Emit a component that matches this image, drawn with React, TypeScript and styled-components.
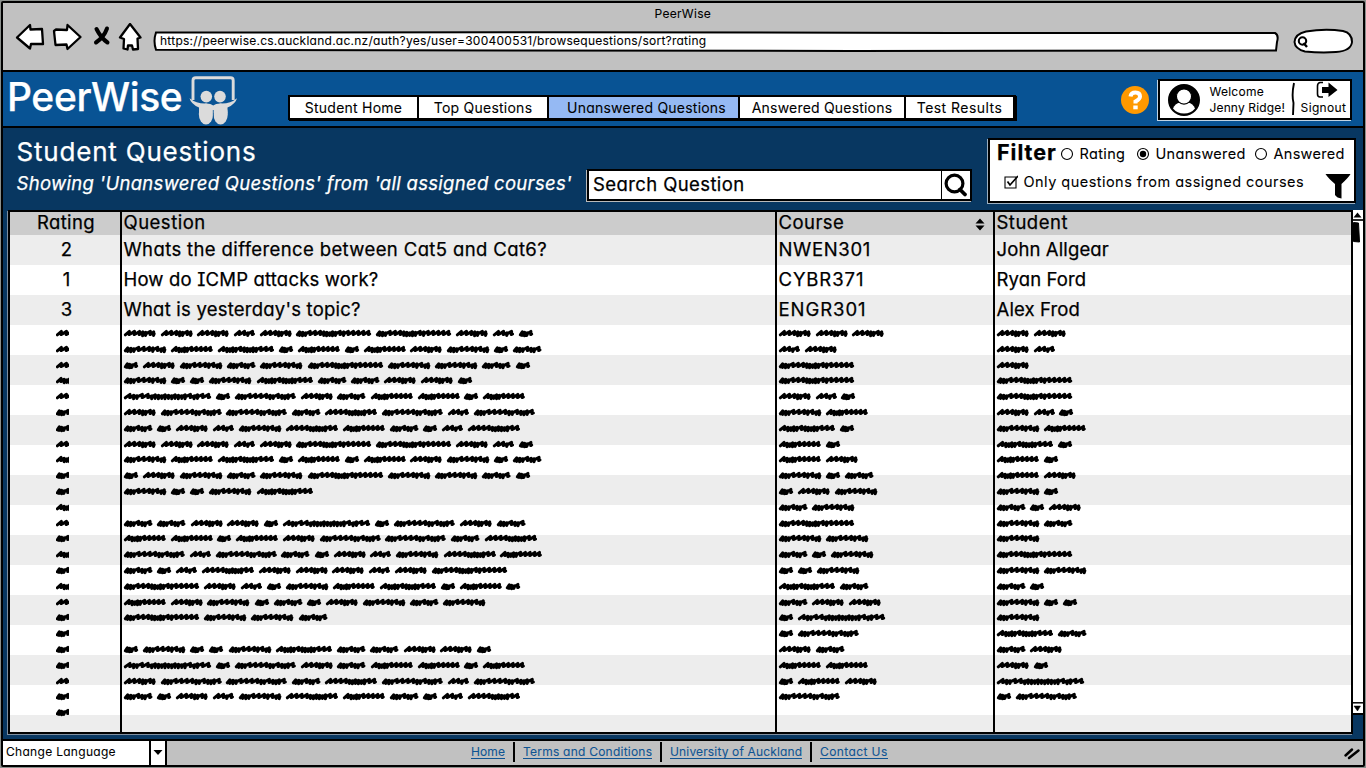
import React from "react";
import styled, { createGlobalStyle } from "styled-components";

const INK = "#000";
const CHROME = "#c1c1c1";
const BLUE = "#085394";
const NAVY = "#083761";
const LINK = "#0f5493";

const GlobalStyle = createGlobalStyle`
  * { box-sizing: border-box; }
  body {
    margin: 0;
    background: #8b908d;
    font-family: Inter, "Liberation Sans", sans-serif;
    font-feature-settings: "cv11" 1, "cv08" 1, "calt" 0;
    color: ${INK};
    overflow: hidden;
  }
`;

const Window = styled.div`
  display: flex;
  flex-direction: column;
  width: 1364px;
  height: 766px;
  margin: 1px;
  border: 2px solid ${INK};
  border-radius: 2px;
  background: ${CHROME};
`;

const Label = styled.span<{ $size: number; $track?: number; $weight?: number; $italic?: boolean }>`
  font-size: ${(p) => p.$size}px;
  line-height: 1;
  letter-spacing: ${(p) => p.$track ?? 0}px;
  font-weight: ${(p) => p.$weight ?? 400};
  font-style: ${(p) => (p.$italic ? "italic" : "normal")};
  -webkit-text-stroke: ${(p) => (p.$size > 17 ? 0.25 : 0.08)}px currentColor;
  white-space: nowrap;
`;

/* Browser chrome */
const Chrome = styled.header`
  height: 69px;
  border-bottom: 2px solid ${INK};
`;

const ChromeTitle = styled.div`
  height: 20px;
  padding: 5px 0 0 651.5px;
  line-height: 1;
  display: flex;
`;

const ChromeBar = styled.div`
  display: flex;
  align-items: flex-start;
`;

const NavIcons = styled.svg`
  width: 140px;
  height: 32px;
  margin-left: 10px;
  flex: none;
`;

const AddressField = styled.div`
  position: relative;
  width: 1127px;
  height: 21px;
  margin-top: 8px;
  padding: 4px 0 0 7px;
  display: flex;
`;

const FieldFrame = styled.svg`
  position: absolute;
  inset: 0;
  width: 100%;
  height: 100%;
  overflow: visible;
`;

const AddressText = styled(Label)`
  position: relative;
`;

const SearchPill = styled.svg`
  width: 61px;
  height: 26px;
  margin: 5px 0 0 13px;
`;

/* Site header */
const SiteHeader = styled.div`
  display: flex;
  align-items: flex-start;
  height: 56px;
  background: ${BLUE};
  border-bottom: 2px solid ${INK};
`;

const Brand = styled.div`
  width: 285px;
  height: 54px;
  display: flex;
  padding: 5px 0 0 4px;
  color: #fff;
`;

const BrandName = styled(Label)`
  width: 181px;
`;

const BrandMark = styled.svg`
  width: 50px;
  height: 50px;
  margin-top: -2px;
`;

const Tabs = styled.nav`
  display: flex;
  width: 728px;
  height: 25px;
  margin: 23px 0 0 0;
  border: 2px solid ${INK};
  border-right-width: 3px;
  background: #fff;
  box-shadow: 1px 1px 0 ${INK};
`;

const Tab = styled.a<{ $width: number; $active?: boolean }>`
  width: ${(p) => p.$width}px;
  display: flex;
  align-items: center;
  justify-content: center;
  background: ${(p) => (p.$active ? "#95b9f3" : "#fff")};
  padding-left: ${(p) => (p.$active ? 6 : 0)}px;
  & + & { border-left: 2px solid ${INK}; }
`;

const HelpIcon = styled.svg`
  width: 30px;
  height: 30px;
  margin: 13px 0 0 103.7px;
`;

const UserCard = styled.div`
  display: flex;
  width: 194px;
  height: 41px;
  margin: 6.5px 0 0 8.8px;
  background: #fff;
  border: 2px solid ${INK};
  box-shadow: -1px 1px 0 rgba(255, 255, 255, 0.75);
`;

const Avatar = styled.svg`
  width: 34px;
  height: 34px;
  margin: 2px 0 0 7px;
  flex: none;
`;

const Greeting = styled.div`
  display: flex;
  flex-direction: column;
  gap: 4px;
  width: 90px;
  flex: none;
  padding: 5px 0 0 8px;
`;

const CardDivider = styled.svg`
  width: 6px;
  height: 36px;
  flex: none;
`;

const Signout = styled.div`
  display: flex;
  flex-direction: column;
  align-items: center;
  width: 52px;
  svg { width: 24px; height: 19px; margin: 0 0 2px 7px; }
`;

/* Question section */
const Section = styled.main`
  flex: 1;
  background: ${NAVY};
  display: flex;
  flex-direction: column;
  min-height: 0;
`;

const SectionTop = styled.div`
  display: flex;
  height: 82px;
`;

const Titles = styled.div`
  width: 584px;
  display: flex;
  flex-direction: column;
  padding: 11px 0 0 13.5px;
  gap: 9px;
  color: #fff;
`;

const SearchBox = styled.div`
  display: flex;
  width: 385px;
  height: 32px;
  margin-top: 41px;
  background: #fff;
  border: 2px solid ${INK};
  box-shadow: -1px 1px 0 #b9b9b9;
`;

const SearchText = styled.div`
  width: 353px;
  padding: 4px 0 0 4px;
  border-right: 1px solid ${INK};
`;

const SearchGlyph = styled.svg`
  width: 28px;
  height: 28px;
`;

const FilterBox = styled.div`
  width: 368px;
  height: 65px;
  margin: 10px 0 0 16px;
  background: #fff;
  border: 2px solid ${INK};
  box-shadow: -1px 1px 0 rgba(255, 255, 255, 0.6);
`;

const FilterRow = styled.div`
  display: flex;
  align-items: center;
  height: 28px;
  padding-left: 7px;
  & + & { padding-left: 13.5px; height: 28px; }
`;

const Radio = styled.svg`
  width: 14px;
  height: 14px;
  flex: none;
`;

const Choice = styled.label<{ $width: number; $gap: number }>`
  display: flex;
  align-items: center;
  width: ${(p) => p.$width}px;
  gap: ${(p) => p.$gap}px;
  flex: none;
`;

const Heading = styled(Choice)`
  padding-bottom: 2px;
`;

const Funnel = styled.svg`
  width: 26px;
  height: 28px;
  margin-top: 8px;
`;

/* Table */
const TableArea = styled.div`
  display: flex;
  margin-left: 5px;
`;

const Table = styled.div`
  display: flex;
  width: 1345px;
  height: 524px;
  border: 2px solid ${INK};
  background: linear-gradient(#ccc 0 23px, transparent 23px),
    repeating-linear-gradient(#ededed 0 30px, #fff 30px 60px) 0 23px;
  background-origin: padding-box;
  box-shadow: -1px 1px 0 #7f8fa0;
`;

const Column = styled.div<{ $width: number; $center?: boolean }>`
  width: ${(p) => p.$width}px;
  & + & { border-left: 2px solid ${INK}; margin-bottom: -2px; }
  ${(p) => (p.$center ? "text-align: center;" : "")}
`;

const HeadCell = styled.div`
  height: 23px;
  display: flex;
  justify-content: space-between;
  padding: 1px 8px 0 1.5px;
`;

const BodyCell = styled.div`
  height: 30px;
  padding: 5px 0 0 1.5px;
`;

const CenterHead = styled(BodyCell)`
  height: 23px;
  padding: 1px 0 0 2px;
`;

const RatingCell = styled(BodyCell)`
  padding-left: 3px;
`;

const SortArrows = styled.svg`
  width: 10px;
  height: 13px;
  margin-top: 5px;
`;

const ScribbleBlock = styled.div<{ $left: number }>`
  padding: 0.6px 0 0 ${(p) => p.$left}px;
`;

const ScribbleLine = styled.div<{ $clip?: boolean }>`
  display: flex;
  align-items: center;
  gap: 5.1px;
  height: 15.8px;
  ${(p) => (p.$clip ? "width: 13px; overflow: hidden;" : "")}
`;

const Stroke = styled.svg`
  height: 9px;
  flex: none;
  overflow: visible;
`;

const ScrollBar = styled.div`
  display: flex;
  flex-direction: column;
  justify-content: space-between;
  width: 10px;
  height: 505px;
  background: #fff;
  border-bottom: 2px solid ${INK};
`;

const ScrollTop = styled.svg`
  width: 10px;
  height: 34px;
`;

const ScrollEnd = styled.svg`
  width: 10px;
  height: 11px;
`;

/* Footer */
const Footer = styled.footer`
  display: flex;
  height: 26px;
  border-top: 2px solid ${INK};
  background: ${CHROME};
`;

const LanguageSelect = styled.div`
  display: flex;
  width: 164px;
  background: #fff;
  border-right: 2px solid ${INK};
`;

const LanguageName = styled.div`
  display: flex;
  width: 148px;
  padding: 5px 0 0 3px;
  border-right: 2px solid ${INK};
`;

const SelectArrow = styled.svg`
  width: 14px;
  height: 24px;
`;

const FooterLinks = styled.div`
  display: flex;
  width: 1176px;
  padding: 1px 0 0 304px;
`;

const FooterLink = styled.a<{ $width: number; $pad?: number }>`
  width: ${(p) => p.$width}px;
  height: 20px;
  display: flex;
  padding: 4px 0 0 ${(p) => p.$pad ?? 8}px;
  color: ${LINK};
  & + & { border-left: 2px solid ${INK}; }
  span { height: 13px; border-bottom: 1px solid ${LINK}; }
`;

const Grip = styled.svg`
  width: 18px;
  height: 20px;
`;

type Kind = "A" | "B" | "C" | "D" | "E" | "F" | "G" | "H" | "I" | "J" | "K";

/* width of a greeked word and the rhythm of its pen strokes: d = dense, l = loose */
const WORDS: Record<Kind, [number, string]> = {
  A: [14, "dddl"],
  B: [20.8, "lldl"],
  C: [28.3, "dddlddl"],
  D: [31.5, "lllddld"],
  E: [42.2, "dddllldldd"],
  F: [41.6, "lddddlllll"],
  G: [51.8, "llllddddddll"],
  H: [55.8, "lddddldddddlll"],
  I: [60.6, "dddllllddldddl"],
  J: [75, "dddllldddddldlllll"],
  K: [87, "lddlldddddddddddlddll"],
};

function wordPath(kind: Kind): string {
  const [width, beat] = WORDS[kind];
  const steps = [...beat].map((b) => (b === "d" ? 3 : 5.2));
  const total = steps.reduce((a, b) => a + b, 0);
  const scale = (width - 2.6) / total;
  let x = 1.3;
  let d = `M${x} 5.8`;
  steps.forEach((s, i) => {
    const w = s * scale;
    const loose = s > 3;
    const top = loose ? 2.4 : 2.8 + (i % 3) * 0.5;
    const low = loose ? 5.6 : 6.4 + (i % 2) * 0.4;
    d += ` L${(x + w * 0.82).toFixed(1)} ${top} L${(x + w * 0.76).toFixed(1)} ${low}`;
    d += ` L${(x + w).toFixed(1)} ${loose ? 5 : 4.6}`;
    x += w;
  });
  return d;
}

function Scribbles({ lines, left, clip }: { lines: string[]; left: number; clip?: boolean }) {
  return (
    <ScribbleBlock $left={left}>
      {lines.map((line, i) => (
        <ScribbleLine key={i} $clip={clip}>
          {[...line].map((k, j) => (
            <Stroke key={j} width={WORDS[k as Kind][0]}>
              <path d={wordPath(k as Kind)} fill="none" stroke={INK} strokeWidth="3" strokeLinecap="round" strokeLinejoin="round" />
            </Stroke>
          ))}
        </ScribbleLine>
      ))}
    </ScribbleBlock>
  );
}

const ratingLines = [..."DDDFDAADFAAFDAFAFDAAAADAA"];
const questionLines = [
  "DDDBDJJDBA", "EFHAFAFDEAC", "ADECEJEECA", "EAAEHCCDDA", "KAIDCFFAF", "DIICGIBI",
  "CADBEGFCABG", "DDDBDJJDBA", "EFHAFAFDEAC", "ADECEJEECA", "EAAEH", "",
  "CCDDAKAIDC", "FFAFDIICG", "IBICADBEGF", "CABGDDDBDJ", "JDBAEFHAFA", "FDEACADECE",
  "JEEC", "", "AEAAEHCCDDA", "KAIDCFFAF", "DIICGIBI", "CADBEGFCABG",
];
const courseLines = [
  "DDD", "BD", "J", "J", "DBA", "EF", "HA", "FA", "FD", "EAC", "ADE", "CE",
  "J", "EE", "CAE", "AAE", "HC", "CDD", "AK", "AI", "DC", "FF", "AFD", "I",
];
const studentLines = [
  "DD", "DB", "D", "J", "J", "DBA", "EF", "HA", "FA", "FD", "EA", "CAD",
  "EC", "E", "J", "EE", "CA", "EAA", "E", "HC", "CD", "DA", "K", "AI",
];

const questions = [
  { rating: "2", text: "Whats the difference between Cat5 and Cat6?", track: 0.38, course: "NWEN301", courseTrack: 0.65, student: "John Allgear" },
  { rating: "1", text: "How do ICMP attacks work?", track: 0.18, course: "CYBR371", courseTrack: 0.9, student: "Ryan Ford" },
  { rating: "3", text: "What is yesterday's topic?", track: 0.22, course: "ENGR301", courseTrack: 0.95, student: "Alex Frod" },
];

function RadioMark({ on }: { on?: boolean }) {
  return (
    <Radio viewBox="0 0 14 14">
      <circle cx="7" cy="7" r="5.500" fill="#fff" stroke={INK} strokeWidth="1.100" />
      {on && <circle cx="7" cy="7" r="3.200" fill={INK} />}
    </Radio>
  );
}

export default function App() {
  return (
    <>
      <GlobalStyle />
      <Window>
        <Chrome>
          <ChromeTitle><Label $size={12} $track={0.3}>PeerWise</Label></ChromeTitle>
          <ChromeBar>
            <NavIcons viewBox="13 23 140 32">
              <g fill="#fff" stroke={INK} strokeWidth="2.300" strokeLinejoin="round">
                <path d="M17 37.500 L30 25 L30.500 29.500 L42 29 L43 44 L31 44 L30 48.500 Z" />
                <path d="M54 31 L56 29.500 L67 30 L67.500 25 L80.500 37 L67.500 49 L66.500 44.500 L55.500 45 Z" />
                <path d="M130 24 L140.500 37.500 L137.500 38.500 L138 49 L133 49.500 L132 45.500 L128 45.500 L127.500 49.500 L123.500 48.500 L124 39 L120 37.500 Z" />
              </g>
              <path d="M96.500 29 Q101 38 107.500 42.500 M107 28.500 Q104 37 96 42.500" fill="none" stroke={INK} strokeWidth="4" strokeLinecap="round" />
            </NavIcons>
            <AddressField>
              <FieldFrame viewBox="0 0 1127 21">
                <path d="M3 1.500 L400 1.200 L800 2 L1122 2 Q1126 4 1124 11 L1123 19.500 L700 20 L3 18.800 Q0 10 3 1.500 Z" fill="#fff" stroke={INK} strokeWidth="2" />
              </FieldFrame>
              <AddressText $size={12} $track={0.25}>
                https://peerwise.cs.auckland.ac.nz/auth?yes/user=300400531/browsequestions/sort?rating
              </AddressText>
            </AddressField>
            <SearchPill viewBox="0 0 61 26">
              <path d="M13 3.500 Q32 .500 50 3 Q59 5 59 14 Q58 23 43 24 Q28 25 12 23.500 Q2 21 1.500 14 Q2 6 13 3.500 Z" fill="#fff" stroke={INK} strokeWidth="2" />
              <circle cx="9.500" cy="13" r="3.700" fill="none" stroke={INK} strokeWidth="2.100" />
              <path d="M10.500 15 L14 19" stroke={INK} strokeWidth="2.400" />
            </SearchPill>
          </ChromeBar>
        </Chrome>

        <SiteHeader>
          <Brand>
            <BrandName $size={39} $weight={500} $track={-0.4}>PeerWise</BrandName>
            <BrandMark viewBox="188 75 50 50">
              <path d="M193 100 V80.500 Q193 77.800 195.800 77.800 H230.500 Q233.200 77.800 233.200 80.500 V100" fill="none" stroke="#dbdbdb" strokeWidth="2.900" />
              <g fill="#dbdbdb">
                <circle cx="206.300" cy="96.600" r="5.800" />
                <circle cx="220" cy="96.600" r="5.800" />
                <path d="M189.500 98.200 Q197 104 206 103.500 Q211 103.500 213.200 105.500 Q215.500 103.500 220.500 103.500 Q230 104 237 98.200 Q235.500 104 227.500 107.500 V113 H199 V107.500 Q191 104 189.500 98.200 Z" />
                <ellipse cx="206" cy="114" rx="7.200" ry="10.500" />
                <ellipse cx="220.600" cy="114" rx="7.200" ry="10.500" />
              </g>
              <path d="M213.300 110 V121" stroke={BLUE} strokeWidth=".800" />
            </BrandMark>
          </Brand>
          <Tabs>
            <Tab $width={127}><Label $size={14} $track={0.24}>Student Home</Label></Tab>
            <Tab $width={130}><Label $size={14} $track={0.24}>Top Questions</Label></Tab>
            <Tab $width={191} $active><Label $size={14} $track={0.22}>Unanswered Questions</Label></Tab>
            <Tab $width={166}><Label $size={14} $track={0.2}>Answered Questions</Label></Tab>
            <Tab $width={109}><Label $size={14} $track={0.45}>Test Results</Label></Tab>
          </Tabs>
          <HelpIcon viewBox="0 0 30 30">
            <circle cx="15" cy="15" r="14" fill="#ff9900" />
            <path d="M10.500 11.500 Q11 7.500 15.500 7.500 Q20 7.500 20 11.500 Q20 14 15.500 16.500 V18.500" fill="none" stroke="#fff" strokeWidth="4" />
            <rect x="13.300" y="20.500" width="4.400" height="3.800" fill="#fff" />
          </HelpIcon>
          <UserCard>
            <Avatar viewBox="0 0 34 34">
              <circle cx="17" cy="17" r="14.700" fill={INK} stroke={INK} strokeWidth="2.600" />
              <path d="M6 25.500 Q8 20.500 13 19.500 H21 Q26 20.500 28 25.500 Q24 30.500 17 30.500 Q10 30.500 6 25.500 Z" fill="#fff" />
              <circle cx="17" cy="13.500" r="7.600" fill="#fff" stroke={INK} strokeWidth="1.200" />
            </Avatar>
            <Greeting>
              <Label $size={12} $track={0.25}>Welcome</Label>
              <Label $size={12} $track={0.15}>Jenny Ridge!</Label>
            </Greeting>
            <CardDivider viewBox="0 0 6 36"><path d="M3 2 Q.500 14 2.500 22 L2 34" fill="none" stroke={INK} strokeWidth="1.900" /></CardDivider>
            <Signout>
              <svg viewBox="0 0 24 19">
                <path d="M8 1.500 H5 Q2.500 2 2.500 5 V13 Q2.500 16 5 16 H8" fill="none" stroke={INK} strokeWidth="1.600" />
                <path d="M7 6 H13.500 V1.500 L22.500 9 L13.500 16 V12 H7 Z" fill={INK} />
              </svg>
              <Label $size={12} $track={0.35}>Signout</Label>
            </Signout>
          </UserCard>
        </SiteHeader>

        <Section>
          <SectionTop>
            <Titles>
              <Label $size={26} $track={0.8}>Student Questions</Label>
              <Label $size={18.5} $track={0.3} $italic>Showing 'Unanswered Questions' from 'all assigned courses'</Label>
            </Titles>
            <SearchBox>
              <SearchText><Label $size={18.5} $track={0.4}>Search Question</Label></SearchText>
              <SearchGlyph viewBox="0 0 28 28">
                <circle cx="12.500" cy="12.500" r="8.400" fill="none" stroke={INK} strokeWidth="3.200" />
                <path d="M18 18.500 L23 23.500" stroke={INK} strokeWidth="3.800" strokeLinecap="round" />
              </SearchGlyph>
            </SearchBox>
            <FilterBox>
              <FilterRow>
                <Heading $width={63} $gap={0}><Label $size={21.5} $weight={700} $track={1}>Filter</Label></Heading>
                <Choice $width={76} $gap={5.5}><RadioMark /><Label $size={14.5} $track={0.35}>Rating</Label></Choice>
                <Choice $width={118} $gap={5.5}><RadioMark on /><Label $size={14.5} $track={0.3}>Unanswered</Label></Choice>
                <Choice $width={92} $gap={5.5}><RadioMark /><Label $size={14.5} $track={0.3}>Answered</Label></Choice>
              </FilterRow>
              <FilterRow>
                <Choice $width={321} $gap={6}>
                  <Radio viewBox="0 0 14 14">
                    <path d="M1 2 H12 V13 H1 Z" fill="none" stroke={INK} strokeWidth="1.100" />
                    <path d="M3.500 6.500 L6 10 L14 1" fill="none" stroke={INK} strokeWidth="1.700" />
                  </Radio>
                  <Label $size={14.5} $track={0.47}>Only questions from assigned courses</Label>
                </Choice>
                <Funnel viewBox="0 0 26 28">
                  <path d="M.500 2 H25.500 Q24 5 16.500 12 V26.500 Q12 26 10 23 V12 Q3 6 .500 2 Z" fill={INK} />
                </Funnel>
              </FilterRow>
            </FilterBox>
          </SectionTop>

          <TableArea>
            <Table>
              <Column $width={110} $center>
                <CenterHead><Label $size={18.5} $track={0.4}>Rating</Label></CenterHead>
                {questions.map((q) => <RatingCell key={q.text}><Label $size={18.5}>{q.rating}</Label></RatingCell>)}
                <Scribbles lines={ratingLines} left={46} clip />
              </Column>
              <Column $width={655}>
                <HeadCell><Label $size={18.5} $track={0.5}>Question</Label></HeadCell>
                {questions.map((q) => <BodyCell key={q.text}><Label $size={18.5} $track={q.track}>{q.text}</Label></BodyCell>)}
                <Scribbles lines={questionLines} left={2} />
              </Column>
              <Column $width={218}>
                <HeadCell>
                  <Label $size={18.5} $track={0.45}>Course</Label>
                  <SortArrows viewBox="0 0 10 13"><path d="M5 .500 L9.500 5.500 H.500 Z M5 12.500 L.500 7.500 H9.500 Z" fill={INK} /></SortArrows>
                </HeadCell>
                {questions.map((q) => <BodyCell key={q.text}><Label $size={18.5} $track={q.courseTrack}>{q.course}</Label></BodyCell>)}
                <Scribbles lines={courseLines} left={2} />
              </Column>
              <Column $width={358}>
                <HeadCell><Label $size={18.5} $track={0.5}>Student</Label></HeadCell>
                {questions.map((q) => <BodyCell key={q.text}><Label $size={18.5} $track={0.12}>{q.student}</Label></BodyCell>)}
                <Scribbles lines={studentLines} left={2} />
              </Column>
            </Table>
            <ScrollBar>
              <ScrollTop viewBox="0 0 10 34">
                <path d="M4.500 2.500 L8.500 7.500 H.500 Z" fill={INK} />
                <path d="M0 10 H10" stroke={INK} strokeWidth="1.700" />
                <path d="M.500 12.500 L5.500 13 L6.500 32 L.500 31.500 Z" fill={INK} stroke={INK} />
              </ScrollTop>
              <ScrollEnd viewBox="0 0 10 11">
                <path d="M0 .800 H10" stroke={INK} strokeWidth="1.500" />
                <path d="M1 4 H7.500 L4.500 9 Z" fill={INK} stroke={INK} strokeWidth=".500" />
              </ScrollEnd>
            </ScrollBar>
          </TableArea>
        </Section>

        <Footer>
          <LanguageSelect>
            <LanguageName><Label $size={12} $track={0.3}>Change Language</Label></LanguageName>
            <SelectArrow viewBox="0 0 14 24"><path d="M2.500 9 H11.500 L7 14 Z" fill={INK} /></SelectArrow>
          </LanguageSelect>
          <FooterLinks>
            <FooterLink $width={42} $pad={0}><Label $size={12} $track={0.1}>Home</Label></FooterLink>
            <FooterLink $width={147}><Label $size={12} $track={0.23}>Terms and Conditions</Label></FooterLink>
            <FooterLink $width={150}><Label $size={12} $track={0.15}>University of Auckland</Label></FooterLink>
            <FooterLink $width={87}><Label $size={12} $track={0.4}>Contact Us</Label></FooterLink>
          </FooterLinks>
          <Grip viewBox="0 0 18 20">
            <path d="M2.500 14.500 L9 8.500 M6 17 L15.500 9.500" stroke={INK} strokeWidth="2.500" strokeLinecap="round" />
          </Grip>
        </Footer>
      </Window>
    </>
  );
}
